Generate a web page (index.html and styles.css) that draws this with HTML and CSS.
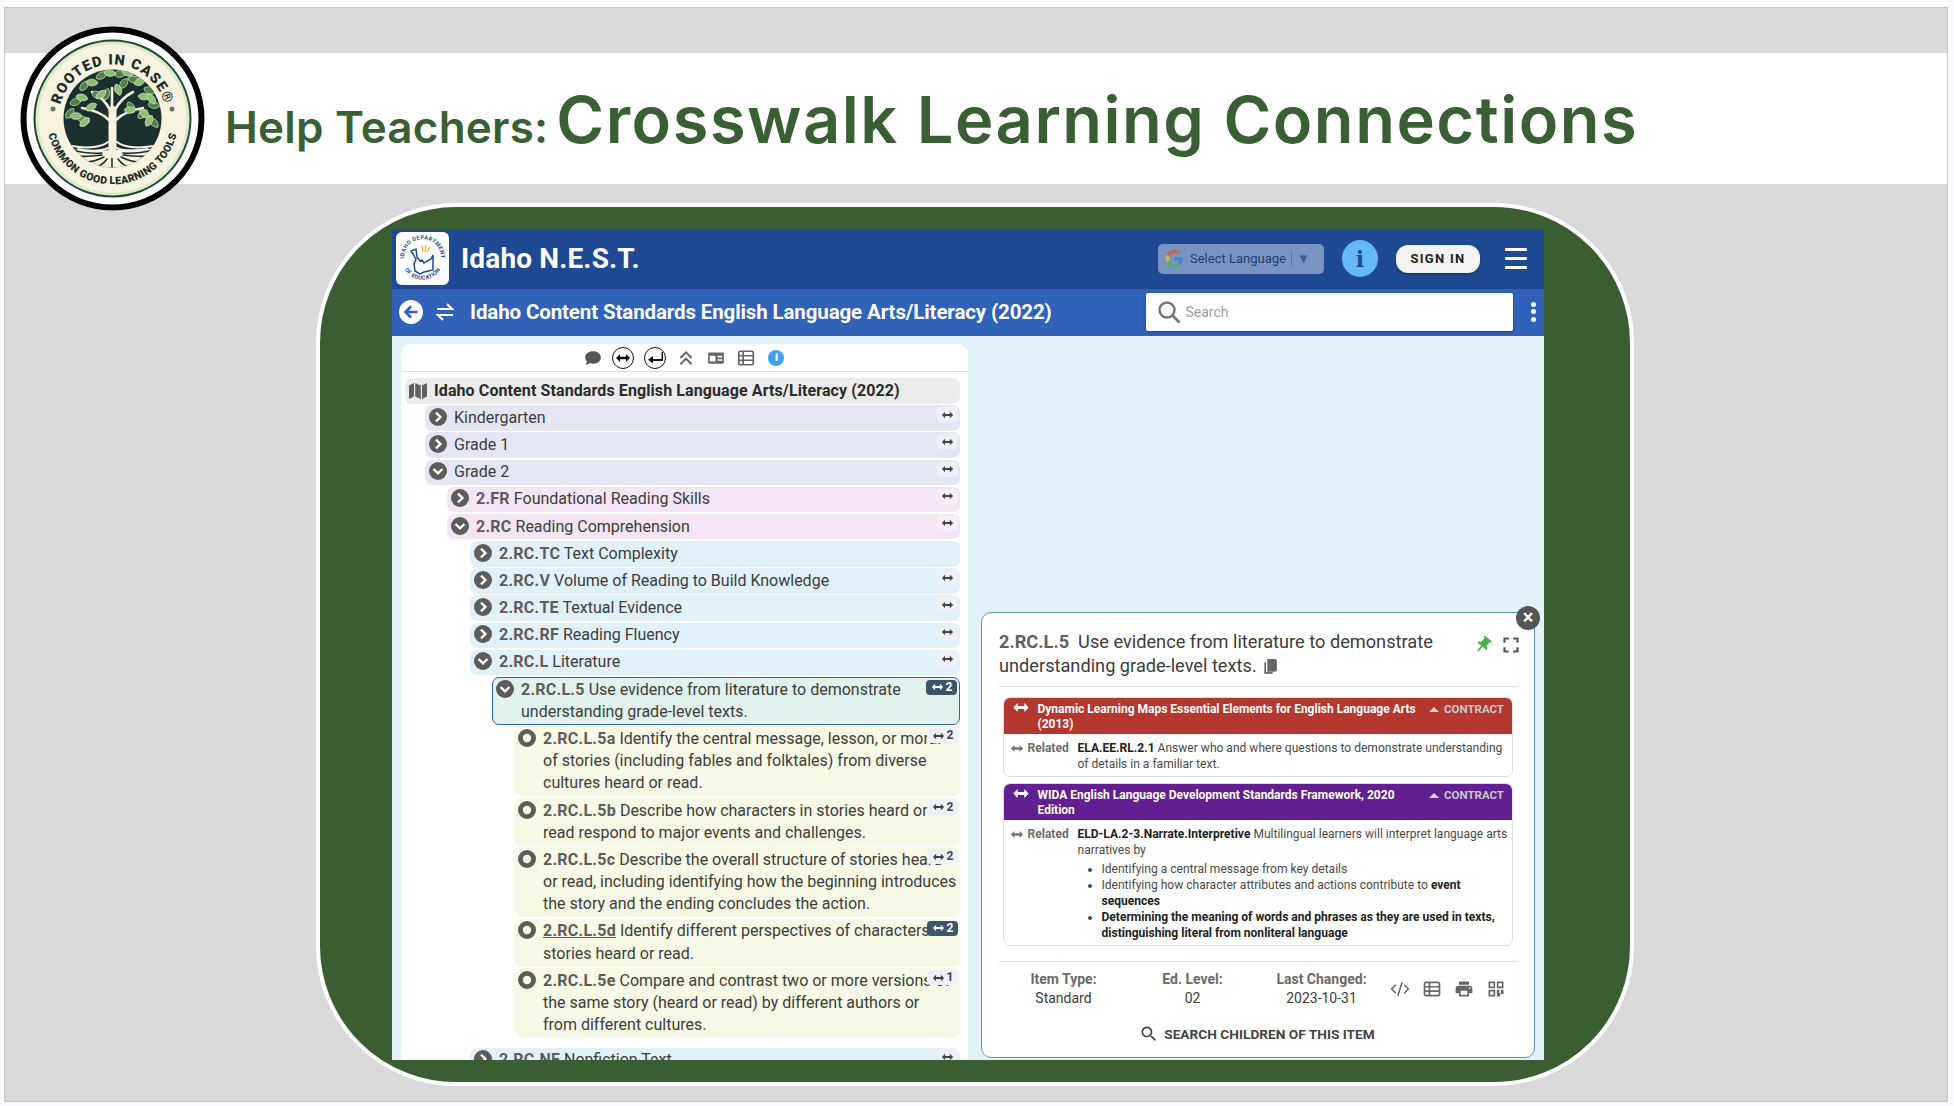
FILE: index.html
```html
<!DOCTYPE html>
<html lang="en">
<head>
    <meta charset="UTF-8">
    <meta name="viewport" content="width=device-width, initial-scale=1.0">
    <title>Help Teachers: Crosswalk Learning Connections</title>
    <link rel="stylesheet" href="styles.css">
</head>
<body>
    <svg class="sprite" width="0" height="0">
        <symbol id="i-right" viewBox="0 0 18 18"><circle cx="9" cy="9" r="9"/><path d="M7 4.6 11.4 9 7 13.4" fill="none" stroke="#fff" stroke-width="2.4"/></symbol>
        <symbol id="i-down" viewBox="0 0 18 18"><circle cx="9" cy="9" r="9"/><path d="M4.6 7 9 11.4 13.4 7" fill="none" stroke="#fff" stroke-width="2.4"/></symbol>
        <symbol id="i-dot" viewBox="0 0 18 18"><circle cx="9" cy="9" r="6.6" fill="none" stroke="currentColor" stroke-width="4.8"/></symbol>
        <symbol id="i-link" viewBox="0 0 16 10"><path d="M5 1 1 5l4 4V6.3h6V9l4-4-4-4v2.700H5z"/></symbol>
    </svg>

    <div class="slide">
        <svg class="logo" viewBox="0 0 185 185">
            <defs>
                <path id="arc-top" d="M38.5 92.5a54 54 0 0 1 108 0"/>
                <path id="arc-bottom" d="M26.5 92.5a66 66 0 0 0 132 0"/>
                <clipPath id="tree-clip"><circle cx="92.5" cy="92.5" r="49"/></clipPath>
                <path id="leaf" d="M0 0C2-5 9-6 12-2 9 3 3 4 0 0z" stroke="#e8f2d8" stroke-width=".6"/>
            </defs>
            <circle cx="92.5" cy="92.5" r="89" fill="#fff" stroke="#000" stroke-width="6"/>
            <circle cx="92.5" cy="92.5" r="78" fill="#dcebcb" stroke="#1f4a36" stroke-width="2"/>
            <circle cx="92.5" cy="92.5" r="74" fill="#f8f3e0"/>
            <text class="logo-text"><textPath href="#arc-top" startOffset="50%">ROOTED IN CASE®</textPath></text>
            <text class="logo-text logo-small"><textPath href="#arc-bottom" startOffset="50%">COMMON GOOD LEARNING TOOLS</textPath></text>
            <circle cx="33" cy="83" r="2.5" fill="#5d7a5d"/>
            <circle cx="152" cy="83" r="2.5" fill="#5d7a5d"/>
            <g clip-path="url(#tree-clip)">
                <rect x="40" y="40" width="105" height="105" fill="#1b2f2f"/>
                <path d="M40 121c18 4 34 4 52 3s36 0 53-3v25H40z" fill="#f8f3e0"/>
                <g fill="none" stroke="#1b2f2f" stroke-linecap="round" stroke-width="1.6">
                    <path d="M52 124c12 3 20 4 30 3M57 130c9 1 17 0 25-1M66 136c6 0 12-2 18-5M76 141c4-1 8-4 11-8M133 124c-12 3-20 4-30 3M128 130c-9 1-17 0-25-1M119 136c-6 0-12-2-18-5M109 141c-4-1-8-4-11-8M92 142v-12"/>
                </g>
                <g fill="none" stroke="#f8f3e0" stroke-linecap="round">
                    <path d="M92.500 128V84" stroke-width="8"/>
                    <path d="M89 94C83 88 74 84 62 82M96 94c6-6 15-10 27-12M90 84C86 76 80 70 72 66M95 84c4-8 10-14 18-18M92 84V62" stroke-width="2.6"/>
                    <path d="M88 116c-6 5-20 7-36 4M97 116c6 5 20 7 36 4M88 122c-8 4-22 3-30 1M97 122c8 4 22 3 30 1" stroke-width="2"/>
                </g>
                <g fill="#4b8449">
                    <use href="#leaf" transform="translate(76 52) rotate(-15)"/><use href="#leaf" transform="translate(94 48) rotate(10)"/>
                    <use href="#leaf" transform="translate(108 52) rotate(25)"/><use href="#leaf" transform="translate(60 64) rotate(-35)"/>
                    <use href="#leaf" transform="translate(124 62) rotate(35)"/><use href="#leaf" transform="translate(50 78) rotate(-10)"/>
                    <use href="#leaf" transform="translate(128 78) rotate(20)"/><use href="#leaf" transform="translate(72 66) rotate(40)"/>
                    <use href="#leaf" transform="translate(100 62) rotate(-40)"/><use href="#leaf" transform="translate(84 74) rotate(-60)"/>
                    <use href="#leaf" transform="translate(108 76) rotate(70)"/><use href="#leaf" transform="translate(58 92) rotate(30)"/>
                    <use href="#leaf" transform="translate(118 92) rotate(-30)"/><use href="#leaf" transform="translate(130 92) rotate(60)"/>
                    <use href="#leaf" transform="translate(46 92) rotate(-40)"/>
                </g>
                <g fill="#8fbf74">
                    <use href="#leaf" transform="translate(84 46) rotate(20)"/><use href="#leaf" transform="translate(66 56) rotate(15)"/>
                    <use href="#leaf" transform="translate(102 44) rotate(35)"/><use href="#leaf" transform="translate(114 58) rotate(-10)"/>
                    <use href="#leaf" transform="translate(56 70) rotate(25)"/><use href="#leaf" transform="translate(76 72) rotate(-25)"/>
                    <use href="#leaf" transform="translate(96 58) rotate(80)"/><use href="#leaf" transform="translate(118 70) rotate(15)"/>
                    <use href="#leaf" transform="translate(128 68) rotate(65)"/><use href="#leaf" transform="translate(66 84) rotate(-20)"/>
                    <use href="#leaf" transform="translate(104 84) rotate(10)"/><use href="#leaf" transform="translate(120 84) rotate(50)"/>
                    <use href="#leaf" transform="translate(50 90) rotate(10)"/><use href="#leaf" transform="translate(60 100) rotate(-30)"/>
                    <use href="#leaf" transform="translate(126 100) rotate(-50)"/>
                </g>
            </g>
        </svg>

        <header class="banner">
            <h1><span class="banner-lead">Help Teachers:</span> <span class="banner-main">Crosswalk Learning Connections</span></h1>
        </header>

        <div class="stage">
            <div class="app">
                <div class="topbar">
                    <svg class="state-logo" viewBox="0 0 53 53">
                        <defs>
                            <path id="seal-top" d="M9.5 33a18.500 18.500 0 1 1 34 0"/>
                            <path id="seal-bottom" d="M6.500 33a21 21 0 0 0 40 0"/>
                        </defs>
                        <rect width="53" height="53" rx="6" fill="#fff"/>
                        <text class="seal-text"><textPath href="#seal-top" startOffset="50%">IDAHO DEPARTMENT</textPath></text>
                        <text class="seal-text"><textPath href="#seal-bottom" startOffset="50%">OF EDUCATION</textPath></text>
                        <path d="M15 19l5-2 1 8 3 4 2-1 2 3 7-4 2-4v15l-9 2-4 2-5-3-1-7 2-5z" fill="none" stroke="#1f4a93" stroke-width="1.5"/>
                        <path d="M26 14l1 6M30 13l-1 7M34 15l-3 5" stroke="#f2bd2e" stroke-width="1.5"/>
                    </svg>
                    <span class="app-name">Idaho N.E.S.T.</span>
                    <div class="translate">
                        <svg class="g-logo" viewBox="0 0 24 24">
                            <path fill="#4f7fd6" d="M22.56 12.25c0-.78-.07-1.53-.2-2.25H12v4.26h5.92c-.26 1.37-1.04 2.53-2.21 3.31v2.77h3.57c2.08-1.92 3.28-4.74 3.28-8.09z"/>
                            <path fill="#5aa878" d="M12 23c2.97 0 5.46-.98 7.28-2.66l-3.57-2.77c-.98.66-2.23 1.06-3.71 1.06-2.86 0-5.29-1.93-6.16-4.53H2.18v2.84C3.99 20.53 7.7 23 12 23z"/>
                            <path fill="#c9b45a" d="M5.84 14.09c-.22-.66-.35-1.36-.35-2.09s.13-1.43.35-2.09V7.07H2.18C1.43 8.55 1 10.22 1 12s.43 3.45 1.18 4.93l2.85-2.22.81-.62z"/>
                            <path fill="#c26a60" d="M12 5.38c1.62 0 3.06.56 4.21 1.64l3.15-3.15C17.45 2.09 14.97 1 12 1 7.7 1 3.99 3.47 2.18 7.07l3.66 2.84c.87-2.6 3.3-4.53 6.16-4.53z"/>
                        </svg>
                        <span class="translate-label">Select Language</span>
                        <span class="translate-caret">▼</span>
                    </div>
                    <span class="info-btn">i</span>
                    <button class="sign-in">SIGN IN</button>
                    <div class="burger"><i></i><i></i><i></i></div>
                </div>

                <div class="subbar">
                    <svg class="back" viewBox="0 0 24 24"><circle cx="12" cy="12" r="12" fill="#fff"/><path d="M18.5 12H7M12 6.500 6.500 12l5.500 5.500" fill="none" stroke="#2f62b8" stroke-width="2.6"/></svg>
                    <svg class="swap" viewBox="0 0 20 20"><path d="M2 7h15l-5-5M18 13H3l5 5" fill="none" stroke="#fff" stroke-width="2.2"/></svg>
                    <h2 class="framework">Idaho Content Standards English Language Arts/Literacy (2022)</h2>
                    <label class="search">
                        <svg viewBox="0 0 24 24"><circle cx="10" cy="10" r="7.500" fill="none" stroke="#757575" stroke-width="2.4"/><path d="m15.500 15.500 7 7" stroke="#757575" stroke-width="2.6"/></svg>
                        <span>Search</span>
                    </label>
                    <div class="kebab"><i></i><i></i><i></i></div>
                </div>

                <div class="content">
                    <section class="tree-card">
                        <div class="toolbar">
                            <svg class="tool" viewBox="0 0 16 16"><path d="M8 2c4 0 7 2.400 7 5.500S12 13 8 13c-1 0-2-.2-2.800-.5C4 13.500 2.600 14 1 14c1-1 1.500-2 1.600-2.900C1.600 10 1 8.800 1 7.500 1 4.400 4 2 8 2z" fill="#555"/></svg>
                            <span class="tool-on"><svg viewBox="0 0 16 10"><path d="M5 1 1 5l4 4V6.300h6V9l4-4-4-4v2.700H5z"/></svg></span>
                            <span class="tool-on"><svg viewBox="0 0 16 12"><path d="M14.500 0v7H6V4L1 7.800 6 11.500V9h10V0z"/></svg></span>
                            <svg class="tool" viewBox="0 0 16 16"><path d="m3 8 5-5 5 5M3 13.500l5-5 5 5" fill="none" stroke="#666" stroke-width="1.8"/></svg>
                            <svg class="tool" viewBox="0 0 16 16"><path fill-rule="evenodd" d="M2 3h12a1 1 0 0 1 1 1v8a1 1 0 0 1-1 1H2a1 1 0 0 1-1-1V4a1 1 0 0 1 1-1zm.5 3v5h5V6zm7 0v1.500h4V6zm0 3v1.500h4V9z" fill="#666"/></svg>
                            <svg class="tool" viewBox="0 0 16 16"><rect x="1.500" y="2" width="13" height="12" rx="1.500" fill="none" stroke="#666" stroke-width="1.5"/><path d="M1.500 6h13M1.500 10h13M5.500 2v12" stroke="#666" stroke-width="1.5"/></svg>
                            <span class="tool-info">i</span>
                        </div>

                        <div class="tree">
                            <div class="row root">
                                <svg class="map" viewBox="0 0 18 16"><path d="M0 2.500 5 0v13.500L0 16zM6.200 0l5.600 2.500V16l-5.600-2.500zM13 2.500 18 0v13.500L13 16z" fill="#5f5f5f"/></svg>
                                <p>Idaho Content Standards English Language Arts/Literacy (2022)</p>
                            </div>
                            <div class="row lv1"><svg class="twist"><use href="#i-right"/></svg><p>Kindergarten</p><span class="link"><svg><use href="#i-link"/></svg></span></div>
                            <div class="row lv1"><svg class="twist"><use href="#i-right"/></svg><p>Grade 1</p><span class="link"><svg><use href="#i-link"/></svg></span></div>
                            <div class="row lv1"><svg class="twist"><use href="#i-down"/></svg><p>Grade 2</p><span class="link"><svg><use href="#i-link"/></svg></span></div>
                            <div class="row lv2"><svg class="twist"><use href="#i-right"/></svg><p><b>2.FR</b> Foundational Reading Skills</p><span class="link"><svg><use href="#i-link"/></svg></span></div>
                            <div class="row lv2"><svg class="twist"><use href="#i-down"/></svg><p><b>2.RC</b> Reading Comprehension</p><span class="link"><svg><use href="#i-link"/></svg></span></div>
                            <div class="row lv3"><svg class="twist"><use href="#i-right"/></svg><p><b>2.RC.TC</b> Text Complexity</p></div>
                            <div class="row lv3"><svg class="twist"><use href="#i-right"/></svg><p><b>2.RC.V</b> Volume of Reading to Build Knowledge</p><span class="link"><svg><use href="#i-link"/></svg></span></div>
                            <div class="row lv3"><svg class="twist"><use href="#i-right"/></svg><p><b>2.RC.TE</b> Textual Evidence</p><span class="link"><svg><use href="#i-link"/></svg></span></div>
                            <div class="row lv3"><svg class="twist"><use href="#i-right"/></svg><p><b>2.RC.RF</b> Reading Fluency</p><span class="link"><svg><use href="#i-link"/></svg></span></div>
                            <div class="row lv3"><svg class="twist"><use href="#i-down"/></svg><p><b>2.RC.L</b> Literature</p><span class="link"><svg><use href="#i-link"/></svg></span></div>
                            <div class="row lv4 selected"><svg class="twist"><use href="#i-down"/></svg><p><b>2.RC.L.5</b> Use evidence from literature to demonstrate understanding grade-level texts.</p><span class="link count dark"><svg><use href="#i-link"/></svg>2</span></div>
                            <div class="row lv5"><svg class="twist"><use href="#i-dot"/></svg><p><b>2.RC.L.5a</b> Identify the central message, lesson, or moral<br>of stories (including fables and folktales) from diverse cultures heard or read.</p><span class="link count"><svg><use href="#i-link"/></svg>2</span></div>
                            <div class="row lv5"><svg class="twist"><use href="#i-dot"/></svg><p><b>2.RC.L.5b</b> Describe how characters in stories heard or read respond to major events and challenges.</p><span class="link count"><svg><use href="#i-link"/></svg>2</span></div>
                            <div class="row lv5"><svg class="twist"><use href="#i-dot"/></svg><p><b>2.RC.L.5c</b> Describe the overall structure of stories heard or read, including identifying how the beginning introduces the story and the ending concludes the action.</p><span class="link count"><svg><use href="#i-link"/></svg>2</span></div>
                            <div class="row lv5"><svg class="twist"><use href="#i-dot"/></svg><p><b class="seen">2.RC.L.5d</b> Identify different perspectives of characters in stories heard or read.</p><span class="link count dark"><svg><use href="#i-link"/></svg>2</span></div>
                            <div class="row lv5"><svg class="twist"><use href="#i-dot"/></svg><p><b>2.RC.L.5e</b> Compare and contrast two or more versions of the same story (heard or read) by different authors or<br>from different cultures.</p><span class="link count"><svg><use href="#i-link"/></svg>1</span></div>
                            <div class="row lv4-sib"><svg class="twist"><use href="#i-right"/></svg><p><b>2.RC.NF</b> Nonfiction Text</p><span class="link"><svg><use href="#i-link"/></svg></span></div>
                        </div>
                    </section>

                    <aside class="detail">
                        <span class="close">×</span>
                        <div class="detail-head">
                            <p class="detail-title"><b>2.RC.L.5</b>&nbsp; Use evidence from literature to demonstrate understanding grade-level texts.
                                <svg class="copy" viewBox="0 0 16 16"><path d="M5 1h7a2 2 0 0 1 2 2v8a2 2 0 0 1-2 2H5z" fill="#666"/><path d="M3 4v10h7" fill="none" stroke="#666" stroke-width="1.6"/></svg>
                            </p>
                            <svg class="pin" viewBox="0 0 24 24"><path transform="rotate(40 12 12)" d="M16 9V4h1c.55 0 1-.45 1-1s-.45-1-1-1H7c-.55 0-1 .45-1 1s.45 1 1 1h1v5c0 1.660-1.340 3-3 3v2h5.970v7l1 1 1-1v-7H19v-2c-1.660 0-3-1.340-3-3z" fill="#4caf50"/></svg>
                            <svg class="expand" viewBox="0 0 24 24"><path d="M7 14H5v5h5v-2H7v-3zm-2-4h2V7h3V5H5v5zm12 7h-3v2h5v-5h-2v3zM14 5v2h3v3h2V5h-5z" fill="#555"/></svg>
                        </div>

                        <div class="crosswalk">
                            <div class="cw-head red">
                                <svg class="cw-arrow" viewBox="0 0 16 10"><path d="M5 1 1 5l4 4V6.300h6V9l4-4-4-4v2.700H5z"/></svg>
                                <span class="cw-name">Dynamic Learning Maps Essential Elements for English Language Arts (2013)</span>
                                <span class="contract"><i></i>CONTRACT</span>
                            </div>
                            <div class="cw-body">
                                <span class="rel"><svg viewBox="0 0 16 10"><use href="#i-link"/></svg>Related</span>
                                <div class="cw-text"><b>ELA.EE.RL.2.1</b> Answer who and where questions to demonstrate understanding of details in a familiar text.</div>
                            </div>
                        </div>

                        <div class="crosswalk">
                            <div class="cw-head purple">
                                <svg class="cw-arrow" viewBox="0 0 16 10"><path d="M5 1 1 5l4 4V6.300h6V9l4-4-4-4v2.700H5z"/></svg>
                                <span class="cw-name">WIDA English Language Development Standards Framework, 2020 Edition</span>
                                <span class="contract"><i></i>CONTRACT</span>
                            </div>
                            <div class="cw-body">
                                <span class="rel"><svg viewBox="0 0 16 10"><use href="#i-link"/></svg>Related</span>
                                <div class="cw-text">
                                    <b>ELD-LA.2-3.Narrate.Interpretive</b> Multilingual learners will interpret language arts narratives by
                                    <ul>
                                        <li>Identifying a central message from key details</li>
                                        <li>Identifying how character attributes and actions contribute to <b>event sequences</b></li>
                                        <li><b>Determining the meaning of words and phrases as they are used in texts, distinguishing literal from nonliteral language</b></li>
                                    </ul>
                                </div>
                            </div>
                        </div>

                        <div class="meta">
                            <div class="meta-item"><b>Item Type:</b><span>Standard</span></div>
                            <div class="meta-item"><b>Ed. Level:</b><span>02</span></div>
                            <div class="meta-item"><b>Last Changed:</b><span>2023-10-31</span></div>
                            <div class="meta-icons">
                                <svg viewBox="0 0 24 24"><path d="M7 7l-5 5 5 5M17 7l5 5-5 5M14.500 4l-5 16" fill="none" stroke="#666" stroke-width="1.8"/></svg>
                                <svg viewBox="0 0 24 24"><rect x="3" y="4" width="18" height="16" rx="2" fill="none" stroke="#666" stroke-width="2"/><path d="M3 9.300h18M3 14.600h18M9 4v16" stroke="#666" stroke-width="2"/></svg>
                                <svg viewBox="0 0 24 24"><path d="M19 8H5c-1.660 0-3 1.340-3 3v6h4v4h12v-4h4v-6c0-1.660-1.340-3-3-3zm-3 11H8v-5h8v5zm3-7c-.55 0-1-.45-1-1s.45-1 1-1 1 .45 1 1-.45 1-1 1zm-1-9H6v4h12V3z" fill="#666"/></svg>
                                <svg viewBox="0 0 24 24"><path fill-rule="evenodd" d="M3 3h8v8H3zm2 2v4h4V5zm8-2h8v8h-8zm2 2v4h4V5zM3 13h8v8H3zm2 2v4h4v-4zm8-2h3v4h2v-4h3v5h-4v3h-4z" fill="#666"/></svg>
                            </div>
                        </div>

                        <div class="search-children">
                            <svg viewBox="0 0 24 24"><path d="M15.500 14h-.79l-.28-.27C15.410 12.590 16 11.110 16 9.500 16 5.910 13.090 3 9.500 3S3 5.910 3 9.500 5.910 16 9.500 16c1.610 0 3.090-.59 4.230-1.570l.27.28v.79l5 4.990L20.490 19l-4.990-5zm-6 0C7.010 14 5 11.990 5 9.500S7.010 5 9.500 5 14 7.010 14 9.500 11.990 14 9.500 14z" fill="#444"/></svg>
                            SEARCH CHILDREN OF THIS ITEM
                        </div>
                    </aside>
                </div>
            </div>
        </div>
    </div>
</body>
</html>
```

FILE: styles.css
```css
* {
    box-sizing: border-box;
}

body {
    font-family: 'Roboto', sans-serif;
    margin: 0;
    height: 1106px;
    overflow: hidden;
    background-color: #f8faff;
    color: #3c3c3c;
}

p, h1, h2, ul {
    margin: 0;
}

.sprite {
    position: absolute;
}

.slide {
    position: relative;
    margin: 7px 6px 0 4px;
    height: 1095px;
    background-color: #d9d9d9;
    border: 1px solid #c6c6c6;
}

.logo {
    position: absolute;
    left: 15px;
    top: 18px;
    width: 185px;
    height: 185px;
}

.logo-text {
    font-family: 'Roboto', sans-serif;
    font-weight: 900;
    font-size: 14.5px;
    letter-spacing: 1.1px;
    text-anchor: middle;
    fill: #1d2e2a;
}

.logo-small {
    font-size: 10.5px;
    letter-spacing: 0.3px;
}

.banner {
    margin-top: 45px;
    height: 131px;
    padding: 2px 0 0 220px;
    background-color: #fff;
    display: flex;
    align-items: center;
}

.banner h1 {
    color: #3a5f34;
    font-family: 'Inter', sans-serif;
    font-weight: 600;
    white-space: nowrap;
}

.banner-lead {
    font-size: 44px;
    letter-spacing: 0.2px;
}

.banner-main {
    font-size: 65px;
    letter-spacing: 1.5px;
}

.stage {
    margin: 19px 0 0 311px;
    width: 1318px;
    height: 883px;
    padding: 23px 86px 0 72px;
    background-color: #3a5e32;
    border: 4px solid #fff;
    border-radius: 140px;
}

.app {
    height: 830px;
    display: flex;
    flex-direction: column;
    overflow: hidden;
}

.topbar {
    height: 59px;
    background-color: #1f4a93;
    display: flex;
    align-items: center;
    padding: 0 17px 2px 4px;
}

.state-logo {
    width: 53px;
    height: 53px;
}

.seal-text {
    font-family: 'Roboto', sans-serif;
    font-size: 5.6px;
    font-weight: 700;
    letter-spacing: 0.35px;
    text-anchor: middle;
    fill: #1f4a93;
}

.app-name {
    margin-left: 12px;
    color: #fff;
    font-size: 28px;
    font-weight: 700;
    letter-spacing: 0.15px;
}

.translate {
    margin-left: auto;
    width: 166px;
    height: 30px;
    border-radius: 5px;
    background-color: #7a94c2;
    display: flex;
    align-items: center;
    padding-left: 7px;
    color: #1f3c73;
}

.g-logo {
    width: 19px;
    height: 19px;
}

.translate-label {
    margin-left: 6px;
    font-size: 13px;
    padding-right: 5px;
    border-right: 1px solid #5a75a8;
}

.translate-caret {
    margin-left: 5px;
    font-size: 13px;
    color: #3f5a90;
}

.info-btn {
    margin-left: 18px;
    width: 36px;
    height: 37px;
    border-radius: 50%;
    background-color: #64b9f7;
    color: #1f4a93;
    font: 700 22px 'DejaVu Serif', serif;
    display: flex;
    align-items: center;
    justify-content: center;
}

.sign-in {
    margin-left: 18px;
    width: 84px;
    height: 28px;
    border: none;
    border-radius: 12px;
    background-color: #f3f3f3;
    color: #222;
    font-family: 'Roboto', sans-serif;
    font-size: 13px;
    font-weight: 700;
    letter-spacing: 1.3px;
    box-shadow: 0 1px 3px rgba(0, 0, 0, 0.4);
}

.burger {
    margin-left: 25px;
    width: 22px;
    display: flex;
    flex-direction: column;
    gap: 6px;
}

.burger i {
    height: 3px;
    background-color: #fff;
    border-radius: 1px;
}

.subbar {
    height: 47px;
    background-color: #2f62b8;
    display: flex;
    align-items: center;
    padding: 0 0 2px 7px;
}

.back {
    width: 24px;
    height: 24px;
}

.swap {
    margin-left: 12px;
    width: 20px;
    height: 20px;
}

.framework {
    margin-left: 15px;
    color: #fff;
    font-size: 20.5px;
    font-weight: 700;
    white-space: nowrap;
    letter-spacing: -0.12px;
}

.search {
    margin-left: auto;
    width: 367px;
    height: 38px;
    background-color: #fff;
    border-radius: 2px;
    display: flex;
    align-items: center;
    padding-left: 11px;
    color: #9e9e9e;
    font-size: 14px;
    box-shadow: 0 1px 3px rgba(0, 0, 0, 0.3);
}

.search svg {
    width: 24px;
    height: 24px;
    margin-right: 5px;
}

.kebab {
    margin: 0 8.5px 0 18px;
    width: 5px;
    display: flex;
    flex-direction: column;
    gap: 2.5px;
}

.kebab i {
    height: 5px;
    border-radius: 50%;
    background-color: #fff;
}

.content {
    flex: 1;
    min-height: 0;
    background-color: #e3f1fb;
    display: flex;
    align-items: flex-start;
    padding: 8px 9px 0;
    gap: 13px;
}

.tree-card {
    flex: none;
    width: 567px;
    height: 820px;
    background-color: #fff;
    border-radius: 10px 10px 0 0;
    overflow: hidden;
}

.toolbar {
    height: 28px;
    border-bottom: 1.5px solid #ddd;
    display: flex;
    align-items: center;
    justify-content: center;
    gap: 13.8px;
}

.tool {
    width: 18px;
    height: 18px;
    margin: 0 -1px;
}

.tool-on {
    width: 22px;
    height: 22px;
    margin: 0 -2px;
    border: 1.5px solid #111;
    border-radius: 50%;
    display: flex;
    align-items: center;
    justify-content: center;
}

.tool-on svg {
    width: 16px;
    height: 12px;
    fill: #111;
}

.tool-info {
    width: 16px;
    height: 16px;
    margin-left: 1px;
    border-radius: 50%;
    background-color: #3f9ff0;
    color: #fff;
    font-size: 11px;
    font-weight: 900;
    display: flex;
    align-items: center;
    justify-content: center;
}

.tree {
    padding: 6px 8px 0 4px;
    display: flex;
    flex-direction: column;
    gap: 1.6px;
}

.row {
    position: relative;
    display: flex;
    align-items: flex-start;
    padding: 1.7px 0 1.7px 4px;
    border-radius: 7px;
    font-size: 16px;
    line-height: 22.2px;
}

.row b {
    color: #5c5c5c;
    font-weight: 700;
    letter-spacing: 0.25px;
}

.row b.seen {
    text-decoration: underline;
}

.twist {
    flex: none;
    width: 18px;
    height: 18px;
    margin: 1px 7px 0 0;
    fill: #5c5c5c;
    color: #5c5c5c;
}

.root {
    background-color: #ebebeb;
    font-weight: 700;
    color: #2a2a2a;
    letter-spacing: 0.1px;
}

.map {
    flex: none;
    width: 18px;
    height: 16px;
    margin: 3px 7px 0 0;
}

.lv1 {
    margin-left: 20px;
    background-color: #e4e6f3;
}

.lv2 {
    margin-left: 42px;
    background-color: #f3e5f3;
}

.lv3 {
    margin-left: 65px;
    background-color: #e2f0fa;
}

.lv4 {
    margin-left: 87px;
    background-color: #e0f1ee;
}

.selected {
    padding: 0.7px 0 0.7px 3px;
    border: 1.5px solid #2f62b8;
}

.lv5 {
    margin-left: 109px;
    background-color: #f7f9e6;
}

.lv4-sib {
    margin: 8px 0 0 65px;
    background-color: #e2f0fa;
}

.link {
    position: absolute;
    top: 2px;
    right: 2px;
    width: 21px;
    height: 15px;
    border-radius: 4px;
    background-color: #eef0f7;
    display: flex;
    align-items: center;
    justify-content: center;
    gap: 2px;
    fill: #444;
}

.link svg {
    width: 13px;
    height: 8px;
}

.lv2 .link {
    background-color: #f5eef6;
}

.count {
    width: 31px;
    font-size: 12px;
    font-weight: 700;
    line-height: 15px;
    color: #444;
}

.dark {
    background-color: #3d5568;
    color: #fff;
    fill: #fff;
}

.detail {
    position: relative;
    flex: none;
    margin-top: 268px;
    width: 554px;
    height: 446px;
    background-color: #fff;
    border: 1px solid #5f93d8;
    border-radius: 10px;
    padding: 0 17px;
}

.close {
    position: absolute;
    top: -7px;
    right: -6px;
    width: 24px;
    height: 24px;
    border-radius: 50%;
    background-color: #555;
    color: #fff;
    font-size: 20px;
    font-weight: 700;
    line-height: 23px;
    text-align: center;
}

.detail-head {
    height: 74px;
    display: flex;
    align-items: flex-start;
    padding-top: 17px;
    border-bottom: 1px solid #ddd;
}

.detail-title {
    flex: none;
    width: 465px;
    font-size: 18.2px;
    line-height: 24px;
    color: #3c3c3c;
}

.detail-title b {
    color: #5f5f5f;
    font-weight: 700;
}

.copy {
    width: 17px;
    height: 17px;
    margin-left: 1px;
    vertical-align: -3px;
}

.pin {
    flex: none;
    margin: 5px 0 0 9px;
    width: 20px;
    height: 20px;
}

.expand {
    flex: none;
    margin: 2px 0 0 5px;
    width: 26px;
    height: 26px;
}

.crosswalk {
    margin: 10px 4px 0 3.5px;
    border: 1px solid #ddd;
    border-radius: 7px;
    overflow: hidden;
}

.crosswalk + .crosswalk {
    margin-top: 6px;
}

.cw-head {
    display: flex;
    align-items: flex-start;
    height: 37px;
    margin: -1px -1px 0;
    padding: 5px 9px 0 9px;
    color: #fff;
    font-size: 12px;
    font-weight: 700;
    line-height: 15px;
}

.red {
    background-color: #b43830;
}

.purple {
    background-color: #621f8f;
}

.cw-arrow {
    flex: none;
    width: 18px;
    height: 11px;
    fill: #fff;
    margin: 0 8px 0 0;
}

.cw-name {
    width: 388px;
}

.contract {
    margin-left: auto;
    color: #c8c8c8;
    font-size: 11.5px;
    display: flex;
    align-items: center;
    gap: 5px;
}

.contract i {
    width: 0;
    height: 0;
    border: 5px solid transparent;
    border-top: none;
    border-bottom: 5px solid #d5d5d5;
}

.cw-body {
    display: flex;
    padding: 6px 0 4px 6px;
    font-size: 12.05px;
    line-height: 16px;
    color: #4a4a4a;
}

.cw-body b {
    color: #222;
    font-weight: 700;
}

.rel {
    flex: none;
    width: 68px;
    color: #6d6d6d;
    font-weight: 700;
    display: flex;
    align-items: flex-start;
    gap: 4px;
}

.rel svg {
    width: 14px;
    height: 9px;
    margin-top: 4px;
    fill: #777;
}

.cw-text ul {
    margin-top: 3px;
    padding-left: 24px;
}

.meta {
    margin-top: 15px;
    padding-top: 8px;
    border-top: 1px solid #ddd;
    display: flex;
    font-size: 14px;
    line-height: 19px;
}

.meta-item {
    width: 129px;
    text-align: center;
    display: flex;
    flex-direction: column;
}

.meta-item b {
    color: #6a6a6a;
    font-weight: 700;
}

.meta-icons {
    margin-left: 4px;
    padding-top: 9px;
    display: flex;
    gap: 12px;
}

.meta-icons svg {
    width: 20px;
    height: 20px;
}

.search-children {
    margin: 16px 2px 0 0;
    display: flex;
    align-items: center;
    justify-content: center;
    gap: 5px;
    font-size: 13.7px;
    font-weight: 700;
    color: #444;
}

.search-children svg {
    width: 20px;
    height: 20px;
}
```
